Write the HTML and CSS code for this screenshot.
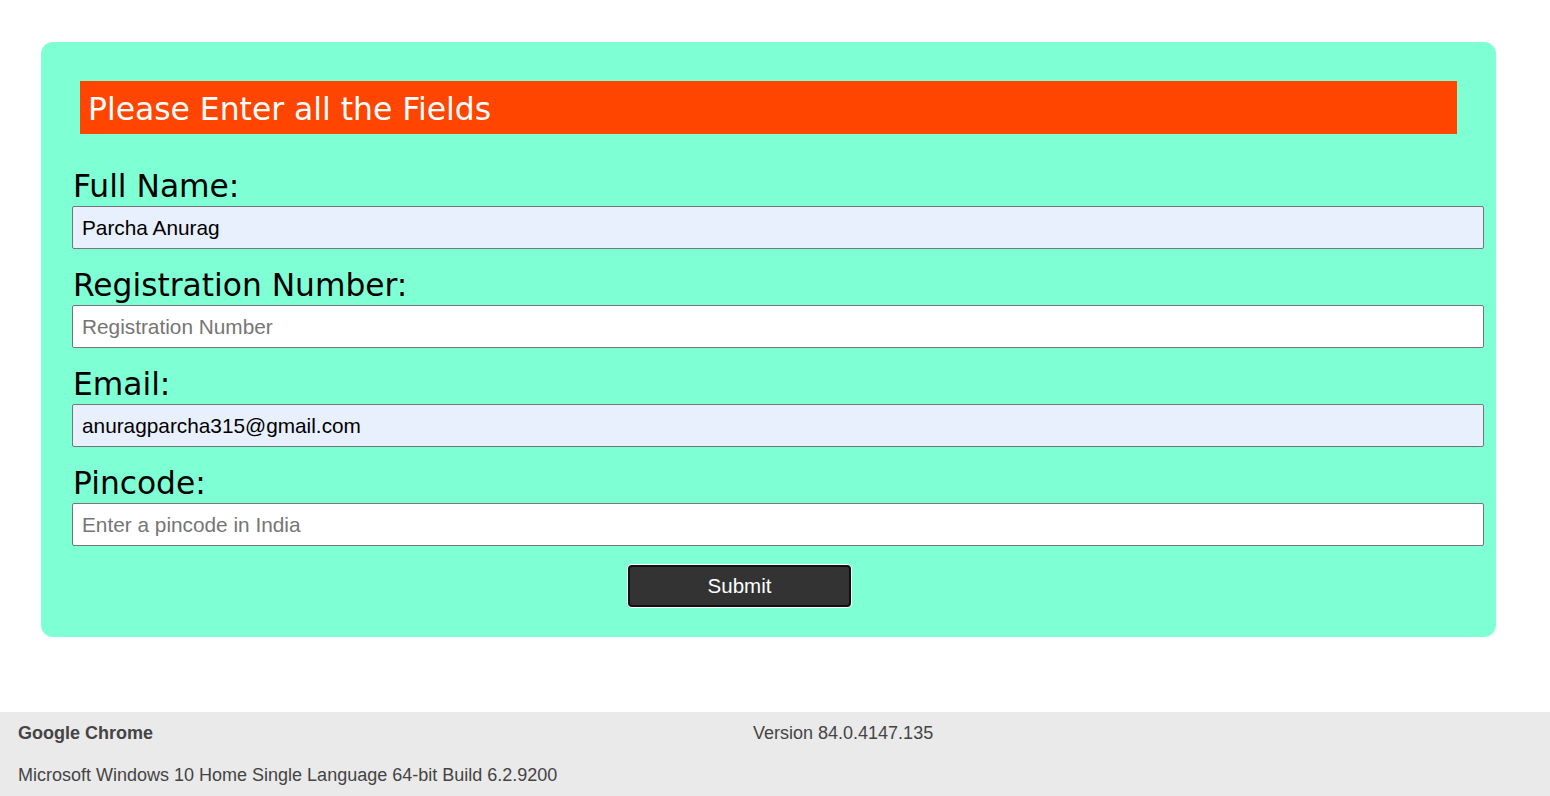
FILE: index.html
```html
<!DOCTYPE html>
<html>
<head>
<meta charset="utf-8">
<link rel="stylesheet" href="styles.css">
</head>
<body>
<main class="page">
  <form class="card">
    <div class="alert">Please Enter all the Fields</div>
    <label class="label" for="name">Full Name:</label>
    <input class="field autofill" id="name" type="text" value="Parcha Anurag">
    <label class="label" for="reg">Registration Number:</label>
    <input class="field" id="reg" type="text" placeholder="Registration Number">
    <label class="label" for="email">Email:</label>
    <input class="field autofill" id="email" type="text" value="anuragparcha315@gmail.com">
    <label class="label" for="pin">Pincode:</label>
    <input class="field" id="pin" type="text" placeholder="Enter a pincode in India">
    <div class="actions">
      <button class="submit" type="button">Submit</button>
    </div>
  </form>
</main>
<footer class="footer">
  <div class="browser">Google Chrome</div>
  <div class="version">Version 84.0.4147.135</div>
  <div class="os">Microsoft Windows 10 Home Single Language 64-bit Build 6.2.9200</div>
</footer>
</body>
</html>
```
FILE: styles.css
```css
html, body {
  margin: 0;
  padding: 0;
  background: #fff;
}
.page {
  padding: 42px 54px 0 41px;
  height: 670px;
  box-sizing: border-box;
}
.card {
  background: #7fffd4;
  border-radius: 12px;
  padding: 39px 12px 30px 31px;
  display: flex;
  flex-direction: column;
}
.alert {
  background: #ff4500;
  color: #fff;
  font-family: "DejaVu Sans", Verdana, sans-serif;
  font-size: 31.4px;
  height: 53px;
  display: flex;
  align-items: center;
  padding: 2px 8px 0;
  box-sizing: border-box;
  margin: 0 27px 35px 8px;
}
.label {
  display: block;
  font-family: "DejaVu Sans", Verdana, sans-serif;
  font-size: 31.3px;
  line-height: 35px;
  color: #000;
  margin: 0 0 2px 1px;
}
.field {
  display: block;
  box-sizing: border-box;
  width: 100%;
  height: 43px;
  border: 1px solid #767676;
  border-radius: 2px;
  background: #fff;
  font-family: "Liberation Sans", Arial, sans-serif;
  font-size: 20.8px;
  color: #000;
  padding: 0 9px;
  margin: 0 0 19px 0;
  outline: none;
}
.field::placeholder {
  color: #757575;
}
.autofill {
  background: #e8f0fe;
}
.actions {
  display: flex;
  justify-content: center;
  padding-right: 77px;
}
.submit {
  width: 223px;
  height: 42px;
  background: #333;
  color: #fff;
  border: 2px solid #111;
  border-radius: 4px;
  box-shadow: 0 0 0 1px #fff;
  font-family: "Liberation Sans", Arial, sans-serif;
  font-size: 20.5px;
  cursor: pointer;
}
.footer {
  background: #eaeaea;
  height: 84px;
  margin-top: 42px;
  box-sizing: border-box;
  padding: 11px 0 0 18px;
  display: grid;
  grid-template-columns: 735px 1fr;
  grid-template-rows: 42px 32px;
  font-family: "Liberation Sans", Arial, sans-serif;
  font-size: 18px;
  color: #444;
}
.browser {
  font-weight: bold;
}
.os {
  grid-column: 1 / 3;
}
```
